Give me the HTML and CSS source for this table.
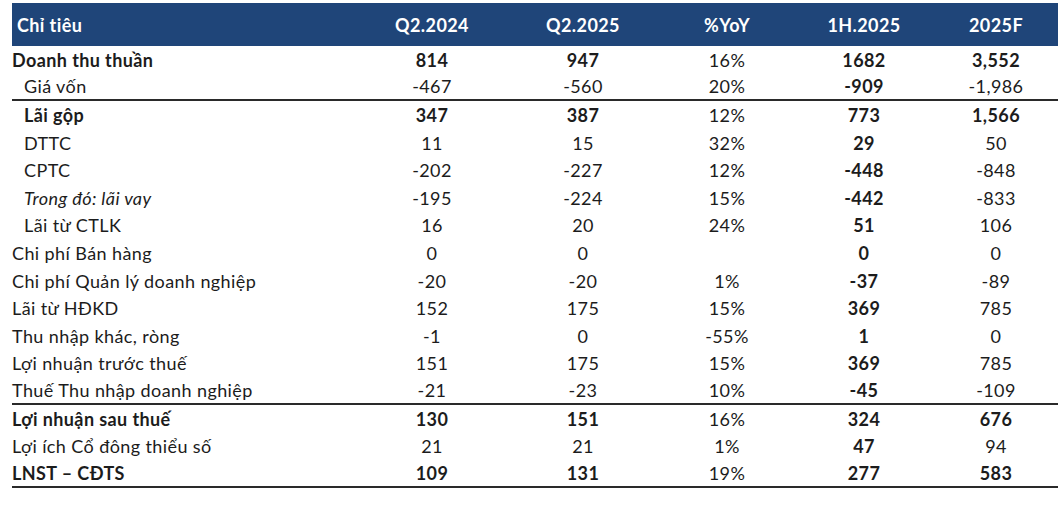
FILE: index.html
```html
<!DOCTYPE html>
<html lang="vi">
<head>
<meta charset="utf-8">
<title>Kết quả kinh doanh</title>
<link rel="stylesheet" href="styles.css">
</head>
<body>
<div class="wrap">
  <div class="table">
    <div class="row head">
      <div class="lbl">Chỉ tiêu</div><div>Q2.2024</div><div>Q2.2025</div><div>%YoY</div><div>1H.2025</div><div>2025F</div>
    </div>
    <div class="row bold">
      <div class="lbl">Doanh thu thuần</div><div>814</div><div>947</div><div class="n">16%</div><div>1682</div><div>3,552</div>
    </div>
    <div class="row rule">
      <div class="lbl ind">Giá vốn</div><div>-467</div><div>-560</div><div>20%</div><div class="b">-909</div><div>-1,986</div>
    </div>
    <div class="row bold">
      <div class="lbl ind">Lãi gộp</div><div>347</div><div>387</div><div class="n">12%</div><div>773</div><div>1,566</div>
    </div>
    <div class="row">
      <div class="lbl ind">DTTC</div><div>11</div><div>15</div><div>32%</div><div class="b">29</div><div>50</div>
    </div>
    <div class="row">
      <div class="lbl ind">CPTC</div><div>-202</div><div>-227</div><div>12%</div><div class="b">-448</div><div>-848</div>
    </div>
    <div class="row">
      <div class="lbl ind it">Trong đó: lãi vay</div><div>-195</div><div>-224</div><div>15%</div><div class="b">-442</div><div>-833</div>
    </div>
    <div class="row">
      <div class="lbl ind">Lãi từ CTLK</div><div>16</div><div>20</div><div>24%</div><div class="b">51</div><div>106</div>
    </div>
    <div class="row">
      <div class="lbl">Chi phí Bán hàng</div><div>0</div><div>0</div><div></div><div class="b">0</div><div>0</div>
    </div>
    <div class="row">
      <div class="lbl">Chi phí Quản lý doanh nghiệp</div><div>-20</div><div>-20</div><div>1%</div><div class="b">-37</div><div>-89</div>
    </div>
    <div class="row">
      <div class="lbl">Lãi từ HĐKD</div><div>152</div><div>175</div><div>15%</div><div class="b">369</div><div>785</div>
    </div>
    <div class="row">
      <div class="lbl">Thu nhập khác, ròng</div><div>-1</div><div>0</div><div>-55%</div><div class="b">1</div><div>0</div>
    </div>
    <div class="row">
      <div class="lbl">Lợi nhuận trước thuế</div><div>151</div><div>175</div><div>15%</div><div class="b">369</div><div>785</div>
    </div>
    <div class="row rule">
      <div class="lbl">Thuế Thu nhập doanh nghiệp</div><div>-21</div><div>-23</div><div>10%</div><div class="b">-45</div><div>-109</div>
    </div>
    <div class="row bold">
      <div class="lbl">Lợi nhuận sau thuế</div><div>130</div><div>151</div><div class="n">16%</div><div>324</div><div>676</div>
    </div>
    <div class="row">
      <div class="lbl">Lợi ích Cổ đông thiểu số</div><div>21</div><div>21</div><div>1%</div><div class="b">47</div><div>94</div>
    </div>
    <div class="row bold rule">
      <div class="lbl">LNST – CĐTS</div><div>109</div><div>131</div><div class="n">19%</div><div>277</div><div>583</div>
    </div>
  </div>
</div>
</body>
</html>
```
FILE: styles.css
```css
html, body {
  margin: 0;
  padding: 0;
  background: #ffffff;
}
.wrap {
  padding: 3px 4px 0 12px;
}
.table {
  width: 1046px;
  font-family: "Lato", "Open Sans", sans-serif;
  font-size: 18px;
  letter-spacing: 0.4px;
  color: #1c1c1c;
}
.row {
  display: grid;
  grid-template-columns: 346px 148px 154px 134px 140px 124px;
  height: 27.6px;
  align-items: center;
  box-sizing: border-box;
}
.row > div {
  text-align: center;
  white-space: nowrap;
}
.row > .lbl {
  text-align: left;
}
.head {
  height: 43px;
  background: #1f4579;
  color: #ffffff;
  font-weight: 700;
}
.head > .lbl {
  padding-left: 5px;
}
.ind {
  padding-left: 12px;
}
.it {
  font-style: italic;
}
.bold {
  font-weight: 700;
}
.bold > .n {
  font-weight: 400;
}
.b {
  font-weight: 700;
}
.rule {
  border-bottom: 2px solid #2a2a2a;
}
```
